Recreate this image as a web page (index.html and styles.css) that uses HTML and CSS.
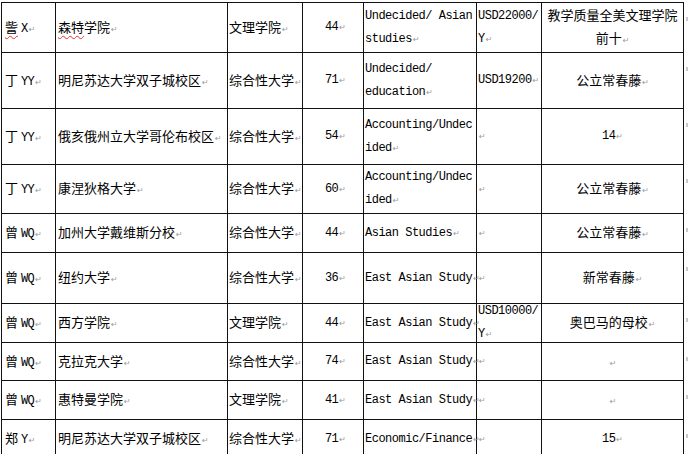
FILE: index.html
```html
<!DOCTYPE html>
<html lang="zh">
<head>
<meta charset="utf-8">
<title>申请结果</title>
<link rel="stylesheet" href="styles.css">
</head>
<body>
<table class="grid">
  <colgroup>
    <col class="c1"><col class="c2"><col class="c3"><col class="c4"><col class="c5"><col class="c6"><col class="c7"><col class="c8">
  </colgroup>
  <tr class="r50">
    <td class="name"><span class="typo">訾</span> <span class="lat">X</span><span class="pm">↵</span></td>
    <td class="school"><span class="typo">森特</span>学院<span class="pm">↵</span></td>
    <td class="kind">文理学院<span class="pm">↵</span></td>
    <td class="num lat">44<span class="pm">↵</span></td>
    <td class="major lat">Undecided/ Asian<br>studies<span class="pm">↵</span></td>
    <td class="cost lat">USD22000/<br>Y<span class="pm">↵</span></td>
    <td class="note">教学质量全美文理学院<br>前十<span class="pm">↵</span></td>
    <td class="end"><span class="eor"></span></td>
  </tr>
  <tr class="r56">
    <td class="name">丁 <span class="lat">YY</span><span class="pm">↵</span></td>
    <td class="school">明尼苏达大学双子城校区<span class="pm">↵</span></td>
    <td class="kind">综合性大学<span class="pm">↵</span></td>
    <td class="num lat">71<span class="pm">↵</span></td>
    <td class="major lat">Undecided/<br>education<span class="pm">↵</span></td>
    <td class="cost lat">USD19200<span class="pm">↵</span></td>
    <td class="note">公立常春藤<span class="pm">↵</span></td>
    <td class="end"><span class="eor"></span></td>
  </tr>
  <tr class="r56">
    <td class="name">丁 <span class="lat">YY</span><span class="pm">↵</span></td>
    <td class="school">俄亥俄州立大学哥伦布校区<span class="pm">↵</span></td>
    <td class="kind">综合性大学<span class="pm">↵</span></td>
    <td class="num lat">54<span class="pm">↵</span></td>
    <td class="major lat">Accounting/Undec<br>ided<span class="pm">↵</span></td>
    <td class="cost lat"><span class="pm">↵</span></td>
    <td class="note lat">14<span class="pm">↵</span></td>
    <td class="end"><span class="eor"></span></td>
  </tr>
  <tr class="r49">
    <td class="name">丁 <span class="lat">YY</span><span class="pm">↵</span></td>
    <td class="school">康涅狄格大学<span class="pm">↵</span></td>
    <td class="kind">综合性大学<span class="pm">↵</span></td>
    <td class="num lat">60<span class="pm">↵</span></td>
    <td class="major lat">Accounting/Undec<br>ided<span class="pm">↵</span></td>
    <td class="cost lat"><span class="pm">↵</span></td>
    <td class="note">公立常春藤<span class="pm">↵</span></td>
    <td class="end"><span class="eor"></span></td>
  </tr>
  <tr class="r39">
    <td class="name">曾 <span class="lat">WQ</span><span class="pm">↵</span></td>
    <td class="school">加州大学戴维斯分校<span class="pm">↵</span></td>
    <td class="kind">综合性大学<span class="pm">↵</span></td>
    <td class="num lat">44<span class="pm">↵</span></td>
    <td class="major lat">Asian Studies<span class="pm">↵</span></td>
    <td class="cost lat"><span class="pm">↵</span></td>
    <td class="note">公立常春藤<span class="pm">↵</span></td>
    <td class="end"><span class="eor"></span></td>
  </tr>
  <tr class="r51">
    <td class="name">曾 <span class="lat">WQ</span><span class="pm">↵</span></td>
    <td class="school">纽约大学<span class="pm">↵</span></td>
    <td class="kind">综合性大学<span class="pm">↵</span></td>
    <td class="num lat">36<span class="pm">↵</span></td>
    <td class="major lat">East Asian Study<span class="pm">↵</span></td>
    <td class="cost lat"><span class="pm">↵</span></td>
    <td class="note">新常春藤<span class="pm">↵</span></td>
    <td class="end"><span class="eor"></span></td>
  </tr>
  <tr class="r39">
    <td class="name">曾 <span class="lat">WQ</span><span class="pm">↵</span></td>
    <td class="school">西方学院<span class="pm">↵</span></td>
    <td class="kind">文理学院<span class="pm">↵</span></td>
    <td class="num lat">44<span class="pm">↵</span></td>
    <td class="major lat">East Asian Study<span class="pm">↵</span></td>
    <td class="cost lat"><div class="squeeze">USD10000/<br>Y<span class="pm">↵</span></div></td>
    <td class="note">奥巴马的母校<span class="pm">↵</span></td>
    <td class="end"><span class="eor"></span></td>
  </tr>
  <tr class="r38">
    <td class="name">曾 <span class="lat">WQ</span><span class="pm">↵</span></td>
    <td class="school">克拉克大学<span class="pm">↵</span></td>
    <td class="kind">综合性大学<span class="pm">↵</span></td>
    <td class="num lat">74<span class="pm">↵</span></td>
    <td class="major lat">East Asian Study<span class="pm">↵</span></td>
    <td class="cost lat"><span class="pm">↵</span></td>
    <td class="note"><span class="pm">↵</span></td>
    <td class="end"><span class="eor"></span></td>
  </tr>
  <tr class="r39">
    <td class="name">曾 <span class="lat">WQ</span><span class="pm">↵</span></td>
    <td class="school">惠特曼学院<span class="pm">↵</span></td>
    <td class="kind">文理学院<span class="pm">↵</span></td>
    <td class="num lat">41<span class="pm">↵</span></td>
    <td class="major lat">East Asian Study<span class="pm">↵</span></td>
    <td class="cost lat"><span class="pm">↵</span></td>
    <td class="note"><span class="pm">↵</span></td>
    <td class="end"><span class="eor"></span></td>
  </tr>
  <tr class="r39">
    <td class="name">郑 <span class="lat">Y</span><span class="pm">↵</span></td>
    <td class="school">明尼苏达大学双子城校区<span class="pm">↵</span></td>
    <td class="kind">综合性大学<span class="pm">↵</span></td>
    <td class="num lat">71<span class="pm">↵</span></td>
    <td class="major lat">Economic/Finance<span class="pm">↵</span></td>
    <td class="cost lat"><span class="pm">↵</span></td>
    <td class="note lat">15<span class="pm">↵</span></td>
    <td class="end"><span class="eor"></span></td>
  </tr>
</table>
</body>
</html>
```
FILE: styles.css
```css
html, body {
  margin: 0;
  padding: 0;
  background: #ffffff;
}

body {
  font-family: "Noto Sans CJK SC", "Noto Sans", sans-serif;
  font-size: 13px;
  color: #000;
  overflow: hidden;
}

.grid {
  border-collapse: collapse;
  table-layout: fixed;
  width: 689px;
  margin: 2px 0 0 1px;
}

.c1 { width: 54px; }
.c2 { width: 172px; }
.c3 { width: 75px; }
.c4 { width: 61px; }
.c5 { width: 113px; }
.c6 { width: 65px; }
.c7 { width: 142px; }
.c8 { width: 7px; }

.grid td {
  border: 1px solid #111;
  padding: 0 1px;
  line-height: 23px;
  vertical-align: middle;
  white-space: nowrap;
  overflow: visible;
  text-align: left;
}

.r50 { height: 50px; }
.r56 { height: 56px; }
.r49 { height: 49px; }
.r39 { height: 39px; }
.r51 { height: 51px; }
.r38 { height: 38px; }

.grid td.name { padding-left: 3px; }
.grid td.school { padding-left: 2px; }
.grid td.kind { padding-left: 1px; }
.grid td.num { text-align: right; padding-right: 17px; }
.grid td.note { text-align: center; }

.lat {
  font-family: "Liberation Mono", "DejaVu Sans Mono", monospace;
  font-size: 12px;
  letter-spacing: -0.5px;
}

.pm {
  font-family: "DejaVu Sans", sans-serif;
  font-size: 8px;
  color: #9a9a9a;
  letter-spacing: 0;
  margin-left: 1px;
}

.typo {
  text-decoration: underline wavy #e03030;
  text-decoration-thickness: 1px;
  text-underline-offset: 3px;
}

.squeeze {
  margin: -5px 0 -4px;
  line-height: 23px;
}

.grid td.end {
  border: none;
  vertical-align: top;
  padding: 11px 0 0 2px;
  line-height: 4px;
}

.eor {
  display: inline-block;
  width: 2px;
  height: 4px;
  background: #c8c8c8;
}
```
